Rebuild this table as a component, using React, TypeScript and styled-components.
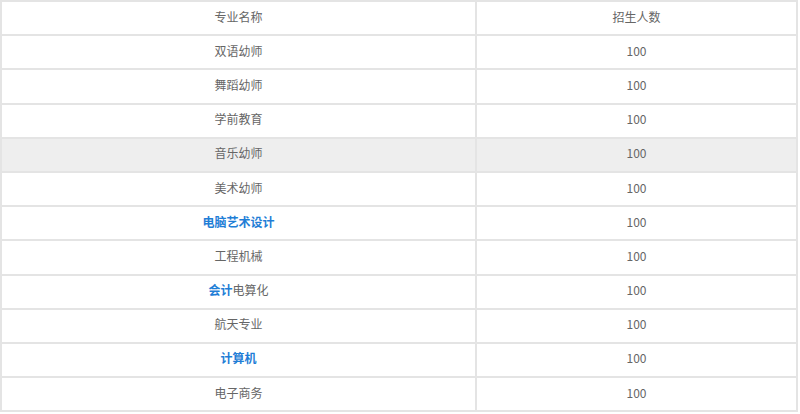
import React from 'react'
import styled, { createGlobalStyle } from 'styled-components'

const GlobalStyle = createGlobalStyle`
	html, body {
		margin: 0;
		padding: 0;
		background: #fff;
	}
	body {
		font-family: 'Noto Sans CJK SC', 'Noto Sans', sans-serif;
	}
`

const Table = styled.table`
	width: 798px;
	border-collapse: collapse;
	table-layout: fixed;
	border: 2px solid #e4e4e4;
	font-size: 12px;
	color: #666;
`

const Row = styled.tr<{ $shaded?: boolean }>`
	height: 34.2px;
	background: ${p => (p.$shaded ? '#eeeeee' : '#fff')};
`

const Cell = styled.td`
	border: 2px solid #e4e4e4;
	text-align: center;
	vertical-align: middle;
	padding: 0 0 3px;
	line-height: 16px;
`

const Link = styled.span`
	color: #1f7ed6;
	font-weight: bold;
`

interface Major {
	name: React.ReactNode
	count: number
	shaded?: boolean
}

const majors: Major[] = [
	{ name: '双语幼师', count: 100 },
	{ name: '舞蹈幼师', count: 100 },
	{ name: '学前教育', count: 100 },
	{ name: '音乐幼师', count: 100, shaded: true },
	{ name: '美术幼师', count: 100 },
	{ name: <Link>电脑艺术设计</Link>, count: 100 },
	{ name: '工程机械', count: 100 },
	{
		name: (
			<>
				<Link>会计</Link>电算化
			</>
		),
		count: 100,
	},
	{ name: '航天专业', count: 100 },
	{ name: <Link>计算机</Link>, count: 100 },
	{ name: '电子商务', count: 100 },
]

const App = () => {
	return (
		<>
			<GlobalStyle />
			<Table>
				<colgroup>
					<col style={{ width: 475 }} />
					<col />
				</colgroup>
				<tbody>
					<Row>
						<Cell>专业名称</Cell>
						<Cell>招生人数</Cell>
					</Row>
					{majors.map((m, i) => (
						<Row key={i} $shaded={m.shaded}>
							<Cell>{m.name}</Cell>
							<Cell>{m.count}</Cell>
						</Row>
					))}
				</tbody>
			</Table>
		</>
	)
}

export default App
